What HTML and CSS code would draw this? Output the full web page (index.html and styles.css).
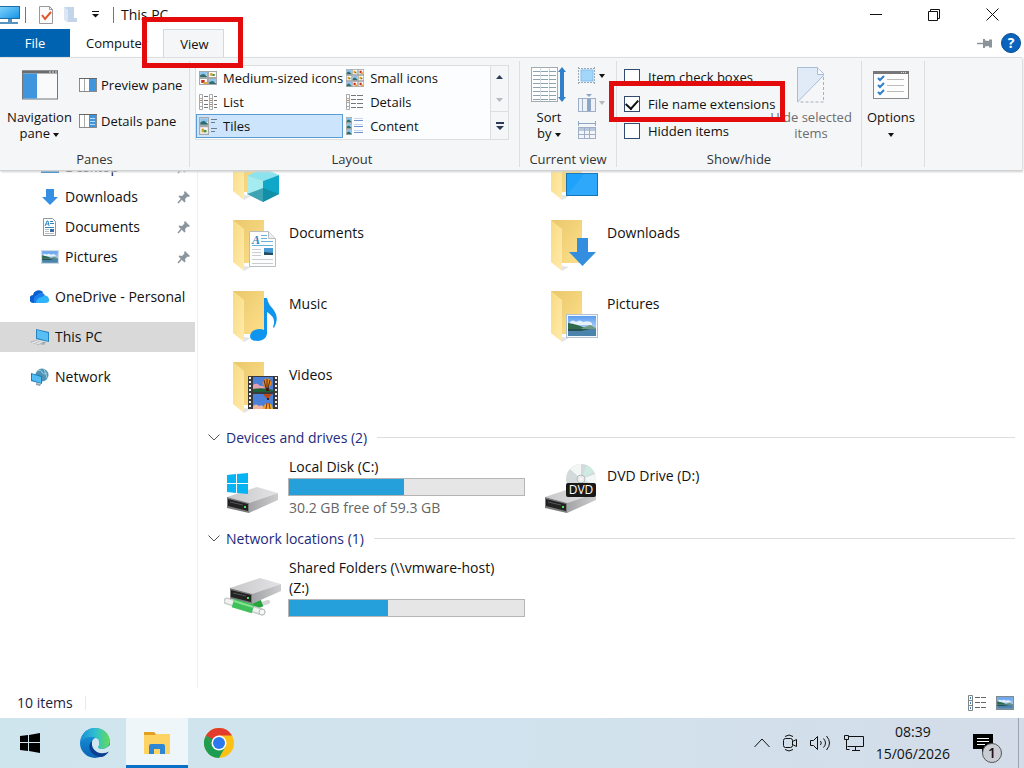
FILE: index.html
```
<!DOCTYPE html>
<html lang="en">

<head>
    <meta charset="UTF-8" />
    <meta name="viewport" content="width=device-width, initial-scale=1.0" />
    <title>This PC</title>
    <link rel="stylesheet" href="styles.css">
</head>

<body>
    <!-- shared icon parts -->
    <svg class="defs" width="0" height="0" aria-hidden="true">
        <defs>
            <linearGradient id="gFlap" x1="0" y1="0" x2="1" y2="1">
                <stop offset="0" stop-color="#f8da80" />
                <stop offset="1" stop-color="#ffebae" />
            </linearGradient>
            <linearGradient id="gBack" x1="0" y1="0" x2="1" y2="1">
                <stop offset="0" stop-color="#e9c76c" />
                <stop offset="1" stop-color="#fee08a" />
            </linearGradient>
            <linearGradient id="gScreen" x1="0" y1="0" x2="1" y2="1">
                <stop offset="0" stop-color="#7fd2fb" />
                <stop offset="1" stop-color="#1795e6" />
            </linearGradient>
            <linearGradient id="gTop" x1="0" y1="0" x2="1" y2="0">
                <stop offset="0" stop-color="#c8c8ca" />
                <stop offset="1" stop-color="#e3e3e5" />
            </linearGradient>
            <linearGradient id="gSide" x1="0" y1="0" x2="1" y2="0">
                <stop offset="0" stop-color="#a2a3a6" />
                <stop offset="1" stop-color="#cdcdcf" />
            </linearGradient>
            <linearGradient id="gSky" x1="0" y1="0" x2="0" y2="1">
                <stop offset="0" stop-color="#5b9df0" />
                <stop offset="1" stop-color="#e3f1fb" />
            </linearGradient>
            <linearGradient id="gEdgeTop" x1="0" y1="0" x2="1" y2="0">
                <stop offset="0" stop-color="#1b8fd8" />
                <stop offset="0.5" stop-color="#2fc0cf" />
                <stop offset="1" stop-color="#64dc55" />
            </linearGradient>
            <linearGradient id="gEdgeLeft" x1="0" y1="0" x2="0" y2="1">
                <stop offset="0" stop-color="#1b9be0" />
                <stop offset="1" stop-color="#0a63b5" />
            </linearGradient>
            <symbol id="folder" viewBox="0 0 58 71">
                <path d="M20 61l7-4-7-1z" fill="#e4e4e4" />
                <path d="M9 10h31v43H20z" fill="url(#gBack)" />
                <path d="M9 10l11 9v42L9 52z" fill="url(#gFlap)" />
            </symbol>
            <symbol id="drive" viewBox="0 0 58 71">
                <path d="M3 44l30-10 21 6-29 10z" fill="url(#gTop)" />
                <path d="M25 50l29-10v7L25 60z" fill="url(#gSide)" />
                <path d="M3 44l22 6v10L3 55z" fill="#77797b" />
                <path d="M4 46l20 5v7L4 53z" fill="#222" />
                <path d="M6 49l13 3" stroke="#555" />
                <rect x="20" y="53" width="2" height="2" fill="#4be34b" />
            </symbol>
            <symbol id="photo" viewBox="0 0 32 24">
                <rect x="0.5" y="0.5" width="31" height="23" fill="#f4f8fb" stroke="#b4c3d4" />
                <rect x="2" y="2" width="28" height="20" fill="url(#gSky)" />
                <path d="M4 8q3-3 6 0q4-3 7 0q6-2 9 1v2H4z" fill="#fff" opacity=".8" />
                <path d="M2 9q9 1 19 6H2z" fill="#2f6a4a" />
                <path d="M16 14l8-3 6 3v2H14z" fill="#6f9a80" />
                <rect x="2" y="15" width="28" height="7" fill="#4a84ad" />
                <path d="M2 15h22l-9 2H2z" fill="#24504f" />
            </symbol>
            <symbol id="pin" viewBox="0 0 14 14">
                <path d="M8 1l5 5-1.500 1-1-.5-2.500 2.500.5 2.500-1 1L1.500 6.500l1-1 2.500.5L7.500 3.500 7 2.500z" fill="#8b959d" />
                <path d="M4.500 9L1 13" stroke="#8b959d" stroke-width="1.500" />
            </symbol>
            <symbol id="thumb" viewBox="0 0 8 7" preserveAspectRatio="none">
                <rect x="0.500" y="0.500" width="7" height="6" fill="#fff" stroke="#a8a8a8" />
                <rect x="1" y="1" width="6" height="3" fill="#8cc4f0" />
                <path d="M1 4l3-1 3 2v1H1z" fill="#2d6e72" />
            </symbol>
            <symbol id="thumb2" viewBox="0 0 8 7" preserveAspectRatio="none">
                <rect x="0.500" y="0.500" width="7" height="6" fill="#fff" stroke="#a8a8a8" />
                <rect x="2" y="2" width="2" height="3" fill="#d9a22b" />
                <rect x="4" y="3" width="2" height="2" fill="#4b8e46" />
            </symbol>
            <symbol id="thumb3" viewBox="0 0 8 7" preserveAspectRatio="none">
                <rect x="0.500" y="0.500" width="7" height="6" fill="#fff" stroke="#a8a8a8" />
                <rect x="2" y="2" width="3" height="3" fill="#c8301f" />
                <rect x="4" y="4" width="3" height="2" fill="#e8a13a" />
            </symbol>
        </defs>
    </svg>

    <header class="titlebar">
        <svg class="app-icon" width="20" height="20" viewBox="0 0 20 20">
            <rect x="0" y="1" width="20" height="13" fill="#1f6da5" />
            <rect x="0" y="2" width="19" height="11" fill="url(#gScreen)" />
            <path d="M8 14h4v3H8zM0 17h18v2H0z" fill="#5793bf" />
        </svg>
        <span class="bar"></span>
        <button class="quick" aria-label="Properties">
            <svg width="14" height="18" viewBox="0 0 14 18">
                <path d="M.5.5h10l3 3v14H.5z" fill="#fbfbfb" stroke="#999" />
                <path d="M10.500.5v3h3" fill="none" stroke="#999" />
                <path d="M3 9l3 4 6-7" fill="none" stroke="#e0562b" stroke-width="2" />
            </svg>
        </button>
        <button class="quick" aria-label="New folder">
            <svg width="13" height="17" viewBox="0 0 13 17">
                <path d="M0 1h10v11h3v4H4z" fill="#c3d5ea" />
                <path d="M0 1l4 3v13l-4-3z" fill="#dbe7f4" />
            </svg>
        </button>
        <button class="quick" aria-label="Customise toolbar">
            <svg width="8" height="7" viewBox="0 0 8 7">
                <path d="M0 .5h7" stroke="#111" />
                <path d="M0 3h7L3.500 6.500z" fill="#111" />
            </svg>
        </button>
        <span class="bar"></span>
        <h1>This PC</h1>
        <div class="window-buttons">
            <button aria-label="Minimise"><svg width="12" height="12" viewBox="0 0 12 12"><path d="M0 5.500h12" stroke="#111" /></svg></button>
            <button aria-label="Restore"><svg width="12" height="12" viewBox="0 0 12 12"><path d="M.5 2.500h9v9h-9zM2.500 2.500v-2h9v9h-2" fill="none" stroke="#111" /></svg></button>
            <button aria-label="Close"><svg width="13" height="13" viewBox="0 0 13 13"><path d="M.5.5l12 12M12.500.5l-12 12" stroke="#111" /></svg></button>
        </div>
    </header>

    <nav class="tabs">
        <button class="tab file">File</button>
        <button class="tab">Computer</button>
        <div class="tab-wrap">
            <button class="tab active">View</button>
            <span class="mark mark-tab"></span>
        </div>
        <div class="tab-tools">
            <button aria-label="Pin the ribbon">
                <svg width="16" height="9" viewBox="0 0 16 9">
                    <path d="M0 4.500h7" stroke="#8d9499" stroke-width="1.500" />
                    <path d="M6 0h2v1.500l4 .5V.5h3v8h-3V7l-4 .5V9H6z" fill="#8d9499" />
                </svg>
            </button>
            <button class="help" aria-label="Help">?</button>
        </div>
    </nav>

    <div class="window">
        <section class="ribbon">
            <div class="group panes">
                <div class="group-body">
                    <button class="big">
                        <svg width="36" height="29" viewBox="0 0 36 29">
                            <rect x=".5" y=".5" width="35" height="28" fill="#fafafa" stroke="#767676" />
                            <rect width="36" height="3" fill="#6d6d6d" />
                            <path d="M27 1.500h2m1 0h2m1 0h2" stroke="#ddd" />
                            <rect x="1" y="3" width="14" height="25" fill="#3f95de" />
                        </svg>
                        <span>Navigation<br>pane <i class="caret"></i></span>
                    </button>
                    <div class="stack">
                        <button class="small">
                            <svg width="18" height="14" viewBox="0 0 18 14">
                                <rect x=".5" y=".5" width="17" height="13" fill="#fff" stroke="#8a8a8a" />
                                <path d="M0 .5h18" stroke="#666" />
                                <path d="M5.500 1v12" stroke="#aaa" />
                                <rect x="10" y="1" width="7" height="12" fill="#3f95de" />
                            </svg>
                            Preview pane
                        </button>
                        <button class="small">
                            <svg width="18" height="14" viewBox="0 0 18 14">
                                <rect x=".5" y=".5" width="17" height="13" fill="#fff" stroke="#8a8a8a" />
                                <path d="M0 .5h18" stroke="#666" />
                                <path d="M5.500 1v12" stroke="#aaa" />
                                <rect x="10" y="1" width="7" height="12" fill="#3f95de" />
                                <path d="M11 4.500h5m-5 3h5m-5 3h5" stroke="#b9dcf8" />
                            </svg>
                            Details pane
                        </button>
                    </div>
                </div>
                <div class="group-name">Panes</div>
            </div>

            <div class="group layout">
                <div class="group-body">
                    <div class="gallery">
                        <div class="views">
                            <button>
                                <svg width="18" height="14" viewBox="0 0 18 14">
                                    <use href="#thumb" width="9" height="7" /><use href="#thumb2" x="9" width="9" height="7" />
                                    <use href="#thumb3" y="7" width="9" height="7" /><use href="#thumb" x="9" y="7" width="9" height="7" />
                                </svg>
                                Medium-sized icons
                            </button>
                            <button>
                                <svg width="18" height="18" viewBox="0 0 18 18">
                                    <use href="#thumb" width="6" height="6" /><use href="#thumb2" x="6" width="6" height="6" /><use href="#thumb3" x="12" width="6" height="6" />
                                    <use href="#thumb2" y="6" width="6" height="6" /><use href="#thumb" x="6" y="6" width="6" height="6" /><use href="#thumb2" x="12" y="6" width="6" height="6" />
                                    <use href="#thumb" y="12" width="6" height="6" /><use href="#thumb3" x="6" y="12" width="6" height="6" /><use href="#thumb3" x="12" y="12" width="6" height="6" />
                                </svg>
                                Small icons
                            </button>
                            <button>
                                <svg width="18" height="16" viewBox="0 0 18 16">
                                    <path d="M.5.5h3v15h-3zM.5 4.500h3m-3 4h3m-3 4h3M10.500.5h3v15h-3zm0 4h3m-3 4h3m-3 4h3" fill="#fff" stroke="#a9a9a9" />
                                    <path d="M5 2.500h4m-4 4h4m-4 4h4m-4 3h4M15 2.500h3m-3 4h3m-3 4h3m-3 3h3" stroke="#777" />
                                    <path d="M1 6.500h2m8 0h2m-2 4h2" stroke="#c97b63" />
                                </svg>
                                List
                            </button>
                            <button>
                                <svg width="18" height="16" viewBox="0 0 18 16">
                                    <path d="M.5.5h3v15h-3zM.5 4.500h3m-3 4h3m-3 4h3" fill="#fff" stroke="#a9a9a9" />
                                    <path d="M5 1.500h5m1 0h6M5 5.500h5m1 0h6M5 9.500h5m1 0h6M5 13.500h5m1 0h6" stroke="#777" />
                                    <path d="M1 6.500h2" stroke="#c97b63" />
                                </svg>
                                Details
                            </button>
                            <button class="chosen">
                                <svg width="18" height="18" viewBox="0 0 18 18">
                                    <use href="#thumb" width="10" height="9" /><use href="#thumb2" y="9" width="10" height="9" />
                                    <path d="M12 2.500h6m-6 3h4M12 11.500h6m-6 3h4" stroke="#6f7d8a" />
                                </svg>
                                Tiles
                            </button>
                            <button>
                                <svg width="18" height="18" viewBox="0 0 18 18">
                                    <use href="#thumb" width="6" height="6" /><use href="#thumb" y="6" width="6" height="6" /><use href="#thumb" y="12" width="6" height="6" />
                                    <path d="M8 3.500h9M8 9.500h9M8 15.500h9" stroke="#6c8fce" />
                                    <path d="M8 1.500h9M8 7.500h9M8 13.500h9" stroke="#c9d6ee" />
                                </svg>
                                Content
                            </button>
                        </div>
                        <div class="gallery-scroll">
                            <button aria-label="Previous row"><svg width="7" height="4" viewBox="0 0 7 4"><path d="M0 4h7L3.500 0z" fill="#2c3c56" /></svg></button>
                            <button aria-label="Next row"><svg width="7" height="4" viewBox="0 0 7 4"><path d="M0 0h7L3.500 4z" fill="#b4b8bf" /></svg></button>
                            <button class="more" aria-label="More"><svg width="8" height="8" viewBox="0 0 8 8"><path d="M0 0h8v2H0zM0 4h8L4 8z" fill="#2c3c56" /></svg></button>
                        </div>
                    </div>
                </div>
                <div class="group-name">Layout</div>
            </div>

            <div class="group current">
                <div class="group-body">
                    <button class="big">
                        <svg width="36" height="36" viewBox="0 0 36 36">
                            <rect x=".5" y=".5" width="26" height="34" fill="#fff" stroke="#a5aaae" />
                            <path d="M9.500 1v33M18.500 1v33" stroke="#d8dde0" />
                            <path d="M2 4.500h23M2 8.500h23M2 12.500h23M2 16.500h23M2 20.500h23M2 24.500h23M2 28.500h23M2 32.500h23" stroke="#8aa3b0" stroke-dasharray="7 1" />
                            <path d="M31 0l4 5h-2v25h2l-4 5-4-5h2V5h-2z" fill="#2f7fcb" />
                        </svg>
                        <span>Sort<br>by <i class="caret"></i></span>
                    </button>
                    <div class="minis">
                        <button aria-label="Group by">
                            <svg width="18" height="18" viewBox="0 0 18 18">
                                <path d="M.5 0v18M16.500 0v18M0 1.500h17M0 15.500h17" stroke="#9aa9b8" stroke-dasharray="2 1" />
                                <rect x="3" y="3" width="12" height="11" fill="#a3d6fb" stroke="#84bdea" />
                            </svg>
                            <i class="caret"></i>
                        </button>
                        <button aria-label="Add columns">
                            <svg width="18" height="18" viewBox="0 0 18 18">
                                <rect x=".5" y="4.500" width="17" height="13" fill="#eef2f8" stroke="#9fb0c6" />
                                <rect x="9" y="5" width="4" height="12" fill="#8ea5c4" />
                                <path d="M4.500 5v13" stroke="#9fb0c6" />
                                <path d="M8 0h6l-3 3z" fill="#8ea5c4" />
                            </svg>
                            <i class="caret pale"></i>
                        </button>
                        <button aria-label="Size all columns to fit">
                            <svg width="18" height="18" viewBox="0 0 18 18">
                                <path d="M.5 0v5M17.500 0v5M1 2.500h16" stroke="#8ea5c4" />
                                <rect x=".5" y="6.500" width="17" height="11" fill="#f3f5f9" stroke="#9fb0c6" />
                                <rect x="1" y="7" width="16" height="3" fill="#b9c8dc" />
                                <path d="M6.500 7v10M11.500 7v10M1 13.500h16" stroke="#9fb0c6" />
                            </svg>
                        </button>
                    </div>
                </div>
                <div class="group-name">Current view</div>
            </div>

            <div class="group showhide">
                <div class="group-body">
                    <div class="checks">
                        <label><input type="checkbox"> Item check boxes</label>
                        <label><input type="checkbox" checked> File name extensions</label>
                        <label><input type="checkbox"> Hidden items</label>
                        <span class="mark mark-check"></span>
                    </div>
                    <button class="big dim" disabled>
                        <svg width="28" height="36" viewBox="0 0 28 36">
                            <path d="M.5.5h20l6 6v2L.5 35z" fill="#e1ebf8" stroke="#a9bcd6" />
                            <path d="M20.500.5v7h6" fill="#f6f9fd" stroke="#a9bcd6" />
                            <path d="M26.500 10v25H1" fill="none" stroke="#a7b0bc" stroke-dasharray="3 2" />
                        </svg>
                        <span>Hide selected<br>items</span>
                    </button>
                </div>
                <div class="group-name">Show/hide</div>
            </div>

            <div class="group options">
                <div class="group-body">
                    <button class="big">
                        <svg width="36" height="28" viewBox="0 0 36 28">
                            <rect x=".5" y=".5" width="35" height="27" fill="#fdfdfd" stroke="#8a8a8a" />
                            <rect width="36" height="3" fill="#777" />
                            <path d="M28 1.500h1m1 0h1m1 0h1" stroke="#ddd" />
                            <path d="M5 7l2 2 4-4M5 14l2 2 4-4M5 21l2 2 4-4" fill="none" stroke="#2f7fcb" stroke-width="2" />
                            <path d="M14 8.500h17M14 14.500h17M14 20.500h17" stroke="#bbb" />
                        </svg>
                        <span>Options<br><i class="caret"></i></span>
                    </button>
                </div>
            </div>
        </section>

        <aside class="sidebar">
            <a class="sub" href="#">
                <svg width="18" height="18" viewBox="0 0 18 18"><rect x="0" y="3" width="18" height="12" fill="#1a7cc4" /></svg>
                <span>Desktop</span>
                <svg class="pin" width="14" height="14"><use href="#pin" /></svg>
            </a>
            <a class="sub" href="#">
                <svg width="18" height="18" viewBox="0 0 18 18"><path d="M5 1h8v8h4l-8 8-8-8h4z" fill="#3590e4" /></svg>
                <span>Downloads</span>
                <svg class="pin" width="14" height="14"><use href="#pin" /></svg>
            </a>
            <a class="sub" href="#">
                <svg width="18" height="18" viewBox="0 0 18 18">
                    <path d="M2.500.5h9l3 3v14h-12z" fill="#fff" stroke="#8f979e" />
                    <path d="M4 8l2-5h1l1 5M5 6h2M9 3.500h3M9 5.500h4M4 9.500h9" fill="none" stroke="#2b86c4" />
                    <path d="M4 11.500h4m-4 2h4m-4 2h9" stroke="#b5bcc2" />
                    <rect x="9" y="11" width="4" height="3" fill="#3a6c9e" />
                </svg>
                <span>Documents</span>
                <svg class="pin" width="14" height="14"><use href="#pin" /></svg>
            </a>
            <a class="sub" href="#">
                <svg width="18" height="14" preserveAspectRatio="none" viewBox="0 0 32 24"><use href="#photo" width="32" height="24" /></svg>
                <span>Pictures</span>
                <svg class="pin" width="14" height="14"><use href="#pin" /></svg>
            </a>
            <a class="root" href="#">
                <svg width="20" height="14" viewBox="0 0 20 14">
                    <path d="M4 13a4 4 0 0 1-1-8A6 6 0 0 1 13 2l-5 9z" fill="#0a5fd0" />
                    <path d="M5 13a5 5 0 0 1 2-8q4-5 8 0l-5 8z" fill="#1b7fec" />
                    <path d="M6 13q0-5 6-6 5-4 7 2 1 4-4 4z" fill="#2fb4fb" />
                </svg>
                <span>OneDrive - Personal</span>
            </a>
            <a class="root selected" href="#">
                <svg width="20" height="18" viewBox="0 0 20 18">
                    <path d="M6 1l13 3v10L6 11z" fill="#2583bd" />
                    <path d="M7 2l11 3v8L7 10z" fill="#58bff5" />
                    <path d="M0 14l5-2 8 3-4 2zM11 14h5l-2 3-4-1z" fill="#a3abb0" />
                    <path d="M2 14l8 2m-6-3l8 2" stroke="#eee" />
                </svg>
                <span>This PC</span>
            </a>
            <a class="root" href="#">
                <svg width="20" height="18" viewBox="0 0 20 18">
                    <circle cx="12" cy="7" r="6.500" fill="#4f93b5" />
                    <path d="M7 3q4-2 5 1t5 1M14 1q2 5 3 9" fill="none" stroke="#a6d2e2" />
                    <path d="M1 5l11 3v8L1 13z" fill="#1b7db8" />
                    <path d="M2 6l9 3v6l-9-3z" fill="#52bdf5" />
                    <path d="M6 15l5 1-1 2-4-1z" fill="#8fa3ad" />
                </svg>
                <span>Network</span>
            </a>
        </aside>

        <main class="content">
            <div class="tiles">
                <a class="tile" href="#" aria-label="3D Objects">
                    <svg width="58" height="71" viewBox="0 0 58 71">
                        <use href="#folder" />
                        <path d="M39 29l16 7-16 6-16-5z" fill="#8be3ee" />
                        <path d="M23 37l16 5v21l-16-8z" fill="#a5ecf1" />
                        <path d="M39 42l16-6v19l-16 8z" fill="#10a7c9" />
                        <path d="M23 55l16-6 16 6-16 8z" fill="#138599" opacity=".7" />
                    </svg>
                </a>
                <a class="tile" href="#" aria-label="Desktop">
                    <svg width="58" height="71" viewBox="0 0 58 71">
                        <use href="#folder" />
                        <rect x="24.500" y="34.500" width="31" height="22" fill="#1ea2fb" stroke="#1474b8" />
                        <path d="M25 56l17-21h13v21z" fill="#3badfb" opacity=".5" />
                    </svg>
                </a>
                <a class="tile" href="#">
                    <svg width="58" height="71" viewBox="0 0 58 71">
                        <use href="#folder" />
                        <path d="M25.500 21.500h19l7 7v28h-26z" fill="#fdfdfd" stroke="#b9bec2" />
                        <path d="M44.500 21.500v7h7" fill="#eee" stroke="#b9bec2" />
                        <text class="doc-letter" x="28" y="34">A</text>
                        <path d="M37 25.500h6m-6 3h6m-6 3h12M28 35.500h21" stroke="#69b2dc" />
                        <path d="M28 39.500h9m-9 3h9m-9 3h9m-9 4h21m-21 4h21" stroke="#c9cdd0" />
                        <rect x="40" y="38" width="9" height="7" fill="#4a9ad6" />
                        <path d="M40 42l9 1v2h-9z" fill="#214f61" />
                    </svg>
                    <span>Documents</span>
                </a>
                <a class="tile" href="#">
                    <svg width="58" height="71" viewBox="0 0 58 71">
                        <use href="#folder" />
                        <path d="M35 28h11v14h8L40.500 56 27 42h8z" fill="#338ee0" />
                    </svg>
                    <span>Downloads</span>
                </a>
                <a class="tile" href="#">
                    <svg width="58" height="71" viewBox="0 0 58 71">
                        <use href="#folder" />
                        <path d="M40 17h3q1 6 6 11 7 9 1 19l-1-1q4-9-6-15v22q-1 6-9 7-8 0-8-5 1-7 11-7l3 1z" fill="#0f95ee" />
                    </svg>
                    <span>Music</span>
                </a>
                <a class="tile" href="#">
                    <svg width="58" height="71" viewBox="0 0 58 71">
                        <use href="#folder" />
                        <use href="#photo" x="24" y="33" width="32" height="24" />
                    </svg>
                    <span>Pictures</span>
                </a>
                <a class="tile" href="#">
                    <svg width="58" height="71" viewBox="0 0 58 71">
                        <use href="#folder" />
                        <rect x="24" y="24" width="30" height="33" fill="#3a3a3a" />
                        <path d="M26 25v32M52 25v32" stroke="#f0f0f0" stroke-width="2" stroke-dasharray="2 2" />
                        <rect x="29" y="25" width="20" height="15" fill="#4c7fd8" />
                        <rect x="29" y="42" width="20" height="15" fill="#4c7fd8" />
                        <path d="M29 33q4-3 7 1 3-1 5 2v4H29z" fill="#e3a2b4" />
                        <path d="M29 37q10-2 20 1v2H29z" fill="#1d6038" />
                        <circle cx="43" cy="31" r="4.500" fill="#e08a1e" />
                        <path d="M43 27v9M40 28l2 8M46 28l-2 8" stroke="#5c2413" />
                        <rect x="42" y="36" width="3" height="3" fill="#3c1c10" />
                        <path d="M39 42h9l-3 4h-3z" fill="#b64a1d" />
                        <rect x="43" y="46" width="2" height="2" fill="#3c1c10" />
                        <path d="M29 54q3-3 6 0 4-2 5 2v1H29z" fill="#f0b5a0" />
                        <path d="M39 57q1-6 5-6t5 6z" fill="#efa622" />
                        <path d="M42 57l1-6m3 6l-1-6" stroke="#8c2b17" />
                    </svg>
                    <span>Videos</span>
                </a>
            </div>

            <h2>
                <svg width="12" height="7" viewBox="0 0 12 7"><path d="M.5.5L6 6l5.500-5.500" fill="none" stroke="#555" /></svg>
                Devices and drives (2)
            </h2>
            <div class="tiles">
                <a class="tile" href="#">
                    <svg width="58" height="71" viewBox="0 0 58 71">
                        <use href="#drive" />
                        <path d="M3 22l9-1v9H3zM13 21l11-1v10H13zM3 31h9v9l-9-1zM13 31h11v10l-11-1z" fill="#06b3f3" />
                    </svg>
                    <div class="info">
                        <span>Local Disk (C:)</span>
                        <div class="meter"><div class="used" style="width: 49%"></div></div>
                        <span class="free">30.2 GB free of 59.3 GB</span>
                    </div>
                </a>
                <a class="tile" href="#">
                    <svg width="58" height="71" viewBox="0 0 58 71">
                        <use href="#drive" />
                        <circle cx="39" cy="26" r="15" fill="#d3dadb" />
                        <path d="M39 26L28 16q5-5 11-5zM39 26l14-5q3 6 0 11z" fill="#f2f6f5" />
                        <path d="M39 26l6-14q5 3 7 7z" fill="#cdebe0" />
                        <circle cx="39" cy="26" r="4" fill="#ececec" stroke="#b5babb" />
                        <circle cx="39" cy="26" r="1" fill="#fff" />
                        <rect x="24" y="30" width="30" height="14" rx="2" fill="#191919" />
                        <text class="dvd-letters" x="39" y="41" text-anchor="middle">DVD</text>
                    </svg>
                    <span>DVD Drive (D:)</span>
                </a>
            </div>

            <h2>
                <svg width="12" height="7" viewBox="0 0 12 7"><path d="M.5.5L6 6l5.500-5.500" fill="none" stroke="#555" /></svg>
                Network locations (1)
            </h2>
            <div class="tiles">
                <a class="tile" href="#">
                    <svg width="58" height="71" viewBox="0 0 58 71">
                        <path d="M32 52l12-4" stroke="#d4d4d4" stroke-width="4" stroke-linecap="round" />
                        <path d="M28 53l10-4" stroke="#27a33d" stroke-width="7" />
                        <use href="#drive" x="3" y="-10" width="58" height="71" />
                        <path d="M3 47l35 11" stroke="#c6cacb" stroke-width="7" stroke-linecap="round" />
                        <path d="M3 47l35 11" stroke="#f1f3f3" stroke-width="4" stroke-linecap="round" />
                        <path d="M9 49l20 6" stroke="#3fc05a" stroke-width="9" />
                        <path d="M10 47l19 6" stroke="#86e08f" stroke-width="2" />
                        <circle cx="38" cy="58" r="3" fill="#f6f6f6" stroke="#b5b9ba" />
                    </svg>
                    <div class="info">
                        <span>Shared Folders (\\vmware-host) (Z:)</span>
                        <div class="meter"><div class="used" style="width: 42%"></div></div>
                    </div>
                </a>
            </div>
        </main>
    </div>

    <footer class="status">
        <span class="count">10 items</span>
        <div class="view-switch">
            <button aria-label="Details view">
                <svg width="18" height="16" viewBox="0 0 18 16">
                    <path d="M.5.5h4v15h-4zM.5 5.500h4m-4 5h4" fill="#fff" stroke="#7f8487" />
                    <path d="M2 3h1M2 8h1M2 13h1" stroke="#3b7cb5" stroke-width="2" />
                    <path d="M7 2.500h5m1 0h5M7 7.500h5m1 0h5M7 12.500h5m1 0h5" stroke="#666" />
                </svg>
            </button>
            <button aria-label="Large icons view">
                <svg width="18" height="14" viewBox="0 0 32 24" preserveAspectRatio="none">
                    <use href="#photo" width="32" height="24" />
                    <rect x="1" y="1" width="30" height="22" fill="none" stroke="#7e8b93" stroke-width="2" />
                </svg>
            </button>
        </div>
    </footer>

    <div class="taskbar">
        <button class="task" aria-label="Start">
            <svg width="20" height="20" viewBox="0 0 20 20"><path d="M0 3l8-1v7H0zM9 2l11-2v9H9zM0 10h8v8l-8-1zM9 10h11v10L9 18z" fill="#000" /></svg>
        </button>
        <button class="task" aria-label="Edge">
            <svg width="30" height="30" viewBox="0 0 30 30">
                <circle cx="15" cy="15" r="15" fill="url(#gEdgeLeft)" />
                <path d="M1 11Q4 0 16 0q12 1 14 13 0 7-8 8-5 0-4-2 2-2 1-5-1-5-8-5-7 0-10 5z" fill="url(#gEdgeTop)" />
                <path d="M12 13q-5 5-1 11 4 5 11 5 5-2 7-6-7 4-13 0-4-3-4-10z" fill="#0c3f91" />
                <path d="M19 14q1 3-1 5 0 2 4 2 4 0 8-4v6q-7 4-13 1-6-4-5-10 1-4 4-4 3 1 3 4z" fill="#d2e6ef" />
            </svg>
        </button>
        <button class="task open" aria-label="File Explorer">
            <svg width="28" height="24" viewBox="0 0 28 24">
                <path d="M1 1h10l2 2v3H1z" fill="#e2a021" />
                <path d="M1 4h11l1-1h14v20H1z" fill="#fdd363" />
                <path d="M6 23V15q0-2 2-2h12q2 0 2 2v8h-5v-5h-6v5z" fill="#2f86d2" />
            </svg>
        </button>
        <button class="task" aria-label="Chrome">
            <svg width="30" height="30" viewBox="0 0 30 30">
                <circle cx="15" cy="15" r="15" fill="#fbc116" />
                <path d="M2 7.500A15 15 0 0 1 28 7.500H15z" fill="#e33b2e" />
                <path d="M2 7.500A15 15 0 0 0 15 30l6.500-11.500-13 0z" fill="#1d9d51" />
                <path d="M2 7.500L4 5h11v4L9 12 8 17z" fill="#e33b2e" />
                <path d="M2 7.500L8.500 19l6-5z" fill="#1d9d51" />
                <circle cx="15" cy="15" r="7.500" fill="#fff" />
                <circle cx="15" cy="15" r="6" fill="#2c78ee" />
            </svg>
        </button>
        <div class="tray">
            <button aria-label="Show hidden icons"><svg width="16" height="10" viewBox="0 0 16 10"><path d="M.5 9L8 1l7.500 8" fill="none" stroke="#111" /></svg></button>
            <button aria-label="Meet now">
                <svg width="16" height="18" viewBox="0 0 16 18">
                    <rect x="1.500" y="4.500" width="9" height="9" rx="2" fill="none" stroke="#111" />
                    <path d="M10.500 7.500l4-2v7l-4-2M3 2.500q4-3 8 0M3 15.500q4 3 8 0" fill="none" stroke="#111" />
                </svg>
            </button>
            <button aria-label="Volume">
                <svg width="22" height="16" viewBox="0 0 22 16">
                    <path d="M.5 5.500h3l4-4v13l-4-4h-3z" fill="none" stroke="#111" />
                    <path d="M10.500 6q1.500 2 0 4M13.500 3.500q4 4.500 0 9M16.500 1q6 7 0 14" fill="none" stroke="#111" />
                </svg>
            </button>
            <button aria-label="Network">
                <svg width="20" height="18" viewBox="0 0 20 18">
                    <path d="M5 2.500h14.500v10H3.500M8 16.500h8M11.500 13v3M.5 1.500h4v4h-4zM2.500 5v10.500h3" fill="none" stroke="#111" />
                </svg>
            </button>
            <div class="clock"><span>08:39</span><span>15/06/2026</span></div>
            <button class="notify" aria-label="Notifications">
                <svg width="20" height="19" viewBox="0 0 20 19">
                    <path d="M0 0h20v15h-7l-4 4v-4H0z" fill="#000" />
                    <path d="M4 4.500h12M4 7.500h12M4 10.500h8" stroke="#fff" />
                </svg>
                <span class="badge">1</span>
            </button>
        </div>
    </div>
</body>

</html>
```
FILE: styles.css
```
* {
    margin: 0;
    padding: 0;
    box-sizing: border-box;
    font-family: 'Open Sans', 'Noto Sans', sans-serif;
}

body {
    display: flex;
    flex-direction: column;
    height: 100vh;
    overflow: hidden;
    background: #fff;
    color: #111;
    font-size: 14px;
    line-height: 20px;
}

button {
    border: 0;
    background: none;
    color: inherit;
    font-size: 13px;
    line-height: 16px;
}

a {
    color: inherit;
    text-decoration: none;
}

svg {
    display: block;
    flex: none;
}

.defs {
    position: absolute;
}

/* title bar */
.titlebar {
    display: flex;
    align-items: center;
    height: 29px;
    flex: none;
}

.bar {
    width: 1px;
    height: 16px;
    margin: 0 7px 0 5px;
    background: #777;
}

.quick {
    display: flex;
    justify-content: center;
    width: 25px;
}

h1 {
    font-size: 14px;
    font-weight: normal;
}

.window-buttons {
    display: flex;
    margin-left: auto;
    padding-right: 3px;
}

.window-buttons button {
    display: flex;
    align-items: center;
    justify-content: center;
    width: 58px;
    height: 28px;
}

/* tabs */
.tabs {
    display: flex;
    height: 28px;
    flex: none;
}

.tab {
    height: 28px;
    padding: 0 16px;
}

.file {
    width: 70px;
    background: #0063b1;
    color: #fff;
}

.tab-wrap {
    position: relative;
    z-index: 3;
}

.active {
    width: 61px;
    background: #f5f6f7;
    border: 1px solid #d5d8da;
    border-bottom: 0;
}

.mark {
    position: absolute;
    border: 5px solid #e30b0b;
    pointer-events: none;
}

.mark-tab {
    left: -21px;
    top: -12px;
    width: 101px;
    height: 51px;
}

.tab-tools {
    display: flex;
    align-items: center;
    gap: 8px;
    margin-left: auto;
    padding-right: 3px;
}

.help {
    width: 20px;
    height: 20px;
    border: 1px solid #0b4f91;
    border-radius: 50%;
    background: #0a64bd;
    color: #fff;
    font-size: 14px;
    font-weight: bold;
}

/* ribbon drops down over the file list */
.window {
    position: relative;
    display: flex;
    flex: 1;
    min-height: 0;
}

.ribbon {
    position: absolute;
    z-index: 2;
    top: 0;
    left: 0;
    right: 2px;
    display: flex;
    height: 114px;
    padding: 3px 0;
    background: #f5f6f7;
    border-top: 1px solid #dcdee0;
    border-bottom: 1px solid #cfd1d3;
    box-shadow: 1px 1px 2px #d0d0d0;
    font-size: 13px;
    line-height: 16px;
}

.group {
    display: flex;
    flex-direction: column;
    border-right: 1px solid #dcdee0;
}

.group-body {
    display: flex;
    flex: 1;
}

.group-name {
    height: 16px;
    text-align: center;
    color: #333;
}

.big {
    display: flex;
    flex-direction: column;
    align-items: center;
    gap: 6px;
    padding-top: 6px;
}

.big svg {
    height: 36px;
}

.caret {
    display: inline-block;
    border: 3px solid transparent;
    border-top: 4px solid #111;
    border-bottom: 0;
    vertical-align: middle;
}

.caret.pale {
    border-top-color: #b5b9bd;
}

.panes {
    width: 190px;
}

.panes .big {
    width: 79px;
}

.stack {
    display: flex;
    flex-direction: column;
    gap: 12px;
    padding-top: 12px;
}

.small {
    display: flex;
    align-items: center;
    gap: 4px;
    height: 24px;
    white-space: nowrap;
}

.layout {
    width: 330px;
    padding: 4px 10px 0 5px;
}

.gallery {
    display: flex;
    width: 100%;
    height: 75px;
    border: 1px solid #dcdee0;
    background: #fcfdfe;
}

.views {
    display: grid;
    flex: 1;
    grid-template-columns: 1fr 1fr;
    grid-template-rows: repeat(3, 24px);
}

.views button {
    display: flex;
    align-items: center;
    gap: 6px;
    padding-left: 3px;
    white-space: nowrap;
}

.views .chosen {
    background: #cce4fc;
    border: 1px solid #5a9bd3;
    padding-left: 2px;
}

.gallery-scroll {
    display: grid;
    width: 18px;
    border-left: 1px solid #dcdee0;
    background: #f5f6f7;
}

.gallery-scroll button {
    display: flex;
    align-items: center;
    justify-content: center;
}

.gallery-scroll .more {
    border-top: 1px solid #dcdee0;
}

.current {
    width: 97px;
}

.current .big {
    width: 58px;
}

.minis {
    display: flex;
    flex-direction: column;
    gap: 9px;
    padding-top: 6px;
}

.minis button {
    display: flex;
    align-items: center;
    gap: 3px;
    height: 18px;
}

.showhide {
    width: 245px;
}

.checks {
    position: relative;
    display: flex;
    flex-direction: column;
    gap: 11px;
    width: 150px;
    padding: 8px 0 0 7px;
}

.checks label {
    display: flex;
    align-items: center;
    gap: 8px;
    white-space: nowrap;
}

.checks input {
    appearance: none;
    display: grid;
    flex: none;
    place-items: center;
    width: 16px;
    height: 16px;
    border: 1px solid #2f4b6e;
    background: #fff;
}

.checks input:checked::after {
    content: "";
    width: 6px;
    height: 10px;
    margin-bottom: 3px;
    border: solid #111;
    border-width: 0 2px 2px 0;
    transform: rotate(42deg);
}

.mark-check {
    left: -8px;
    top: 20px;
    width: 176px;
    height: 41px;
}

.showhide .big {
    width: 88px;
}

.dim {
    color: #6d6d6d;
    white-space: nowrap;
}

.options {
    width: 63px;
}

.options .big {
    width: 58px;
}

/* navigation */
.sidebar {
    width: 198px;
    flex: none;
    padding: 95px 2px 0 0;
    border-right: 1px solid #efefef;
}

.sidebar a {
    display: flex;
    align-items: center;
    height: 30px;
    white-space: nowrap;
}

.sub {
    gap: 6px;
    padding: 0 4px 0 41px;
}

.root {
    gap: 5px;
    margin-bottom: 10px;
    padding-left: 30px;
}

.sub + .root {
    margin-top: 10px;
}

.selected {
    background: #d9d9d9;
}

.pin {
    margin-left: auto;
}

/* file list */
.content {
    flex: 1;
    min-width: 0;
    overflow: hidden;
    padding: 82px 9px 0 10px;
}

.tiles {
    display: grid;
    grid-template-columns: repeat(2, 318px);
    padding-left: 16px;
}

.tile {
    display: flex;
    gap: 6px;
    height: 71px;
}

.tile > span {
    padding: 13px 0 0 1px;
}

.info {
    width: 237px;
    padding-top: 4px;
}

.info span {
    display: block;
    padding: 0 20px 0 1px;
}

.meter {
    height: 18px;
    margin: 1px 0 2px;
    border: 1px solid #b5b5b5;
    background: #e6e6e6;
}

.used {
    height: 100%;
    background: #26a0da;
}

.free {
    color: #666;
}

.doc-letter {
    font: italic bold 12px 'Liberation Serif', serif;
    fill: #2b86c4;
}

.dvd-letters {
    font-size: 12px;
    fill: #fff;
}

h2 {
    display: flex;
    align-items: center;
    gap: 6px;
    height: 29px;
    margin-bottom: 1px;
    color: #1e2a7b;
    font-size: 14px;
    font-weight: normal;
}

h2::after {
    content: "";
    flex: 1;
    height: 1px;
    margin-left: 4px;
    background: #dedede;
}

/* status bar */
.status {
    display: flex;
    align-items: center;
    justify-content: space-between;
    height: 30px;
    flex: none;
    padding: 0 10px 0 17px;
}

.count {
    padding-right: 12px;
    border-right: 1px solid #e8e8e8;
    line-height: 14px;
    color: #1c2340;
}

.view-switch {
    display: flex;
    align-items: center;
    gap: 10px;
}

/* taskbar */
.taskbar {
    display: flex;
    height: 50px;
    flex: none;
    background: linear-gradient(to right, #cfe5ee, #d1e3ee 50%, #d3dce8);
}

.task {
    display: flex;
    align-items: center;
    justify-content: center;
    width: 62px;
}

.task:first-child {
    width: 64px;
    padding-right: 4px;
}

.open {
    background: #eff6fa;
    border-bottom: 3px solid #0a70c8;
    padding-top: 3px;
}

.tray {
    display: flex;
    align-items: center;
    gap: 12px;
    margin-left: auto;
    margin-right: 5px;
    padding-right: 25px;
    border-right: 1px solid #9aa5b0;
}

.clock {
    display: flex;
    flex-direction: column;
    gap: 2px;
    align-items: center;
}

.notify {
    position: relative;
    margin-left: 11px;
}

.badge {
    position: absolute;
    left: 9px;
    top: 9px;
    width: 20px;
    height: 20px;
    border: 1px solid #555;
    border-radius: 50%;
    background: #c9cdd3;
    font-size: 14px;
    font-weight: 600;
    line-height: 18px;
}
```
